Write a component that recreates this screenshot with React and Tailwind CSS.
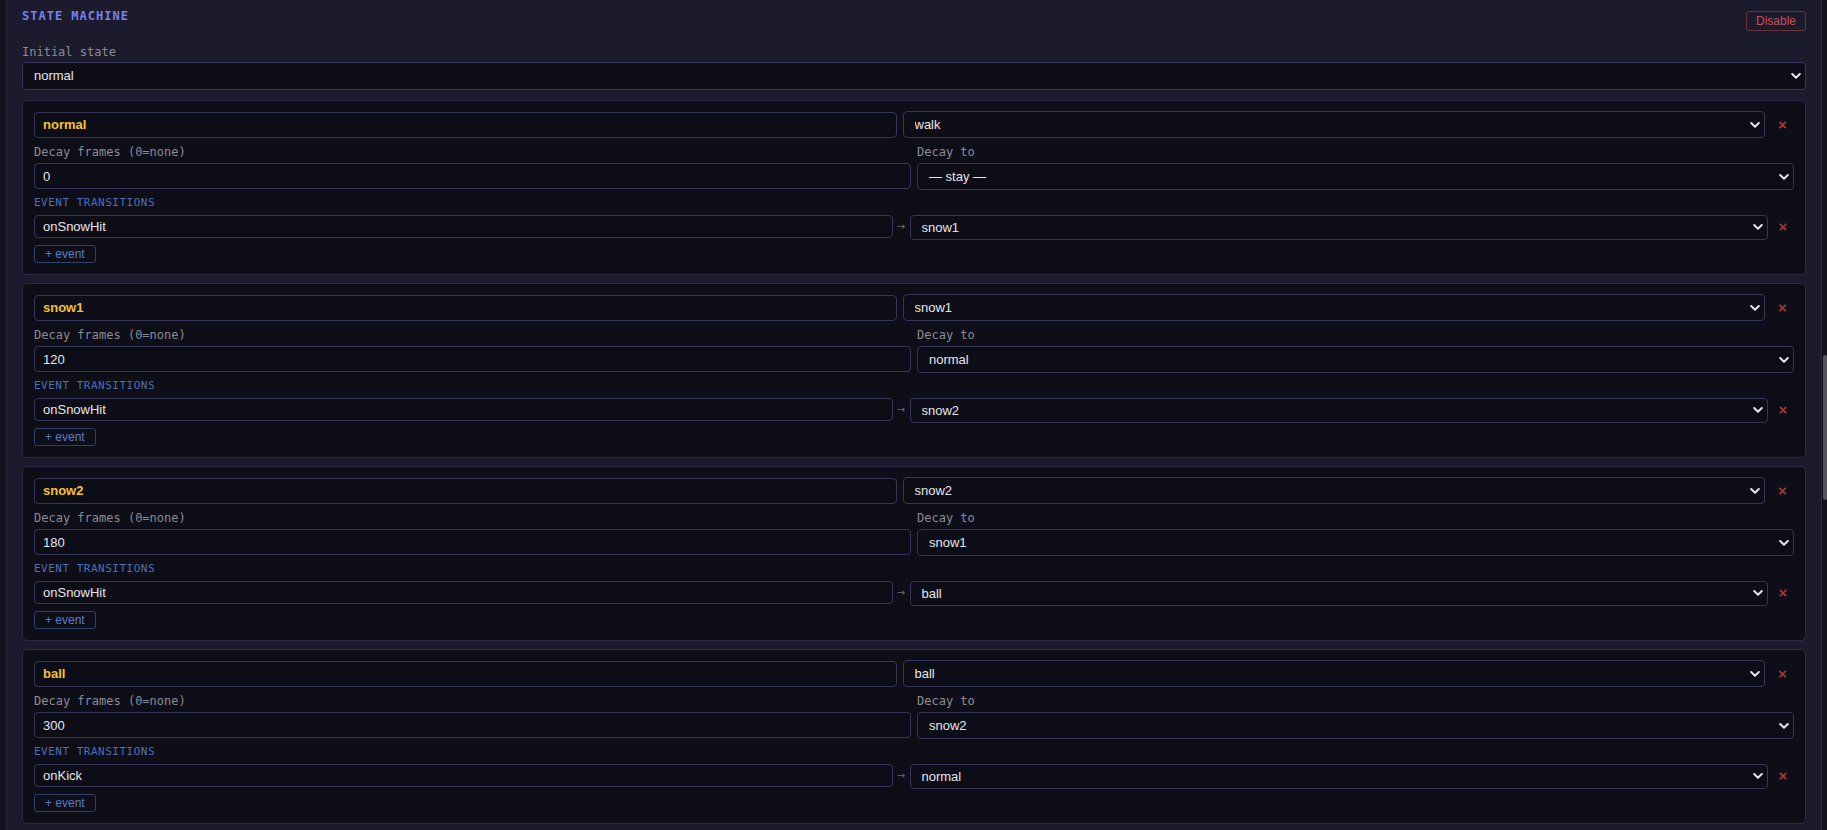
import React from "react";

const SANS = "font-['Liberation_Sans',Arial,sans-serif]";
const MONO = "font-['DejaVu_Sans_Mono',monospace]";

const states = [
  { name: "normal", anim: "walk", decay: "0", decayTo: "— stay —", events: [["onSnowHit", "snow1"]] },
  { name: "snow1", anim: "snow1", decay: "120", decayTo: "normal", events: [["onSnowHit", "snow2"]] },
  { name: "snow2", anim: "snow2", decay: "180", decayTo: "snow1", events: [["onSnowHit", "ball"]] },
  { name: "ball", anim: "ball", decay: "300", decayTo: "snow2", events: [["onKick", "normal"]] },
];

function Chevron() {
  return (
    <svg
      className="pointer-events-none absolute right-[5px] top-1/2 -translate-y-1/2"
      width="10"
      height="7"
      viewBox="0 0 10 7"
      fill="none"
    >
      <path d="M1.2 1.5 L5 5.2 L8.8 1.5" stroke="#e4e4ea" strokeWidth="2" strokeLinecap="round" strokeLinejoin="round" />
    </svg>
  );
}

function Select({ value, className }) {
  return (
    <div className={`relative ${className}`}>
      <select
        defaultValue={value}
        className={`appearance-none w-full h-full bg-[#0d0d17] border border-[#36365a] rounded-[4px] pl-[11px] pr-6 text-[13px] text-[#e6e6ea] outline-none ${SANS}`}
      >
        <option>{value}</option>
      </select>
      <Chevron />
    </div>
  );
}

function RemoveBtn() {
  return (
    <button className={`w-full flex items-center justify-center text-[15px] leading-none font-bold text-[#a83636] ${SANS}`}>
      ×
    </button>
  );
}

function StateCard({ s }) {
  return (
    <div className="bg-[#0e0e19] border border-[#2b2b47] rounded-[5px] px-[11px] pt-[10px] pb-[10px]">
      <div className="grid grid-cols-[minmax(0,1fr)_minmax(0,1fr)_23px] items-center gap-[6px] h-[26px]">
        <input
          defaultValue={s.name}
          className={`w-full h-[26px] bg-[#0d0d17] border border-[#36365a] rounded-[4px] px-[8px] text-[13px] font-bold text-[#f5c22c] outline-none ${SANS}`}
        />
        <Select value={s.anim} className="w-full h-[27px]" />
        <RemoveBtn />
      </div>

      <div className="grid grid-cols-2 gap-[6px] mt-[6px]">
        <div>
          <div className={`text-[12px] leading-[18px] text-[#8b8b92] ${MONO}`}>Decay frames (0=none)</div>
          <input
            defaultValue={s.decay}
            className={`mt-[2px] w-full h-[26px] bg-[#0d0d17] border border-[#36365a] rounded-[4px] px-[8px] text-[13px] text-[#e6e6ea] outline-none ${SANS}`}
          />
        </div>
        <div>
          <div className={`text-[12px] leading-[18px] text-[#8b8b92] ${MONO}`}>Decay to</div>
          <Select value={s.decayTo} className="mt-[2px] w-full h-[27px]" />
        </div>
      </div>

      <div className={`mt-[5px] text-[11px] leading-[16px] tracking-[0.5px] text-[#4c6fb8] ${MONO}`}>EVENT TRANSITIONS</div>

      {s.events.map(([ev, target], i) => (
        <div
          key={i}
          className="grid grid-cols-[minmax(0,1fr)_9px_minmax(0,1fr)_22px] items-center gap-[4px] h-[25px] mt-[3px]"
        >
          <input
            defaultValue={ev}
            className={`w-full h-[23px] bg-[#0d0d17] border border-[#36365a] rounded-[4px] px-[8px] text-[13px] text-[#e6e6ea] outline-none ${SANS}`}
          />
          <span className="text-center text-[10px] leading-none text-[#6a6a78] font-['DejaVu_Sans',sans-serif]">→</span>
          <Select value={target} className="w-full h-[25px]" />
          <RemoveBtn />
        </div>
      ))}

      <button
        className={`mt-[6px] h-[18px] px-[10px] border border-[#2d3f6b] rounded-[3px] text-[12px] leading-none text-[#5a7cc8] ${SANS}`}
      >
        + event
      </button>
    </div>
  );
}

export default function App() {
  return (
    <div className="h-screen overflow-hidden flex bg-[#12121c] pl-[6px]">
      <div className="flex-1 min-w-0 bg-[#1b1b2d] border-x border-[#2a2a45] px-[15px] pt-[8px]">
        <div className="flex justify-between items-start">
          <h2 className={`text-[12px] leading-[16px] font-bold tracking-[1px] text-[#7c80ec] ${MONO}`}>STATE MACHINE</h2>
          <button
            className={`mt-[3px] h-[20px] px-[9px] border border-[#6e3038] rounded-[3px] text-[12px] leading-none text-[#cc4f55] ${SANS}`}
          >
            Disable
          </button>
        </div>

        <div className={`mt-[12px] text-[12px] leading-[18px] text-[#8b8b92] ${MONO}`}>Initial state</div>
        <Select value="normal" className="mt-[1px] h-[28px]" />

        <div className="mt-[10px] flex flex-col gap-[8px]">
          {states.map((s) => (
            <StateCard key={s.name} s={s} />
          ))}
        </div>
      </div>
      <div className="w-[5px] shrink-0">
        <div className="mt-[355px] h-[145px] w-[4px] ml-[1px] rounded-full bg-[#55555f]" />
      </div>
    </div>
  );
}
